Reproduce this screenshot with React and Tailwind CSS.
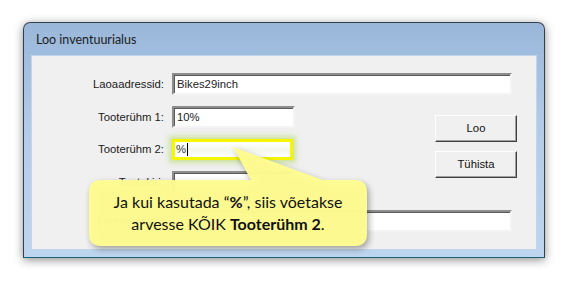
import React from "react";

const sys = { fontFamily: '"Liberation Sans", Arial, sans-serif' };

function Field({ w, children, className = "" }) {
  return (
    <div
      className={`h-[22px] bg-white border-2 border-t-[#8d8d8d] border-l-[#8d8d8d] border-r-[#f4f4f4] border-b-[#f4f4f4] shadow-[inset_1px_1px_0_#5a5a5a] flex items-center pl-[3px] text-[11.3px] text-[#222] ${className}`}
      style={{ width: w }}
    >
      {children}
    </div>
  );
}

function Label({ children }) {
  return (
    <div className="w-[132px] mr-[8px] text-right text-[11.3px] text-[#1a1a1a]">{children}</div>
  );
}

function Btn({ children }) {
  return (
    <div className="w-[82px] h-[27px] bg-[#f0f0f0] border border-t-[#ffffff] border-l-[#ffffff] border-r-[#3f3f3f] border-b-[#3f3f3f] shadow-[inset_-1px_-1px_0_#a0a0a0] flex items-center justify-center text-[11.3px] text-[#111]">
      {children}
    </div>
  );
}

export default function App() {
  return (
    <div className="relative w-[568px] h-[281px] bg-white overflow-hidden pt-[22px] pl-[23px]" style={sys}>
      <div className="w-[522px] h-[236px] rounded-t-[7px] border border-[#33404e] border-b-[#1f5f78] bg-gradient-to-b from-[#9ab7da] via-[#b5cde9] to-[#bdd5ee] shadow-[0_2px_10px_rgba(0,0,0,0.45)] flex flex-col px-[7px] pb-[7px]">
        <div className="h-[32px] flex items-center pl-[5px] pt-[2px] text-[12.5px] text-[#1c1c1c]" style={{ fontFamily: 'Lato, "Open Sans", sans-serif' }}>
          Loo inventuurialus
        </div>
        <div className="flex-1 bg-[#f0f0f0] border border-[#c3d5ea] pt-[17px]">
          <div className="flex items-center">
            <Label>Laoaadressid:</Label>
            <Field w={340}>Bikes29inch</Field>
          </div>
          <div className="flex mt-[11px]">
            <div className="w-[403px] flex flex-col">
              <div className="flex items-center">
                <Label>Tooterühm 1:</Label>
                <Field w={123}>10%</Field>
              </div>
              <div className="flex items-center mt-[11px]">
                <Label>Tooterühm 2:</Label>
                <div className="w-[121px] h-[21px] border-[3px] border-[#f6f600] shadow-[0_0_5px_3px_rgba(175,215,90,0.55)] bg-gradient-to-b from-[#ffffff] via-[#f3f8ec] to-[#ffffff] flex items-center pl-[1px] text-[11.3px] text-[#444]">
                  %<span className="inline-block w-[1px] h-[13px] bg-black ml-[1px]" />
                </div>
              </div>
              <div className="flex items-center mt-[11px]">
                <Label>Tootekiri:</Label>
                <Field w={123}></Field>
              </div>
            </div>
            <div className="flex flex-col pt-[9px] gap-[9px]">
              <Btn>Loo</Btn>
              <Btn>Tühista</Btn>
            </div>
          </div>
          <div className="flex items-center mt-[17px]">
            <Label>Kommentaar:</Label>
            <Field w={340}></Field>
          </div>
        </div>
      </div>

      <svg
        className="absolute left-[80px] top-[140px] drop-shadow-[2px_3px_3px_rgba(0,0,0,0.35)]"
        width="300"
        height="120"
        viewBox="0 0 300 120"
      >
        <path
          d="M 21 40 H 171 L 153 7 L 243 40 H 275 Q 287 40 287 52 V 94 Q 287 106 275 106 H 21 Q 9 106 9 94 V 52 Q 9 40 21 40 Z"
          fill="rgba(255,252,145,0.97)"
        />
      </svg>
      <div
        className="absolute left-[89px] top-[180px] w-[278px] h-[66px] flex items-center justify-center text-center text-[16px] leading-[22px] text-[#111]"
        style={{ fontFamily: 'Lato, "Open Sans", sans-serif' }}
      >
        <div>
          Ja kui kasutada “<b>%</b>”, siis võetakse
          <br />
          arvesse KÕIK <b>Tooterühm 2</b>.
        </div>
      </div>
    </div>
  );
}
